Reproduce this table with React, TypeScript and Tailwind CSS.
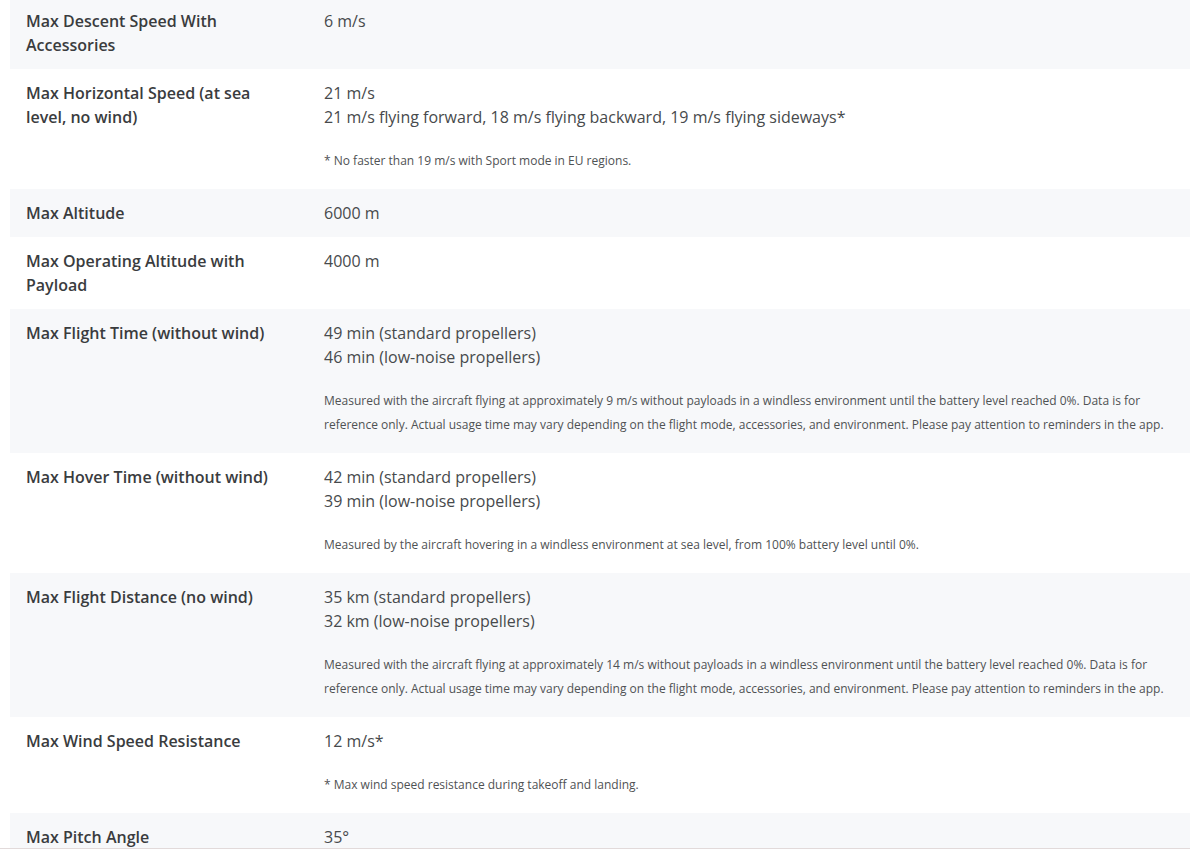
type Spec = {
  label: string;
  values: string[];
  notes?: string[];
};

const specs: Spec[] = [
  { label: "Max Descent Speed With Accessories", values: ["6 m/s"] },
  {
    label: "Max Horizontal Speed (at sea level, no wind)",
    values: ["21 m/s", "21 m/s flying forward, 18 m/s flying backward, 19 m/s flying sideways*"],
    notes: ["* No faster than 19 m/s with Sport mode in EU regions."],
  },
  { label: "Max Altitude", values: ["6000 m"] },
  { label: "Max Operating Altitude with Payload", values: ["4000 m"] },
  {
    label: "Max Flight Time (without wind)",
    values: ["49 min (standard propellers)", "46 min (low-noise propellers)"],
    notes: [
      "Measured with the aircraft flying at approximately 9 m/s without payloads in a windless environment until the battery level reached 0%. Data is for reference only. Actual usage time may vary depending on the flight mode, accessories, and environment. Please pay attention to reminders in the app.",
    ],
  },
  {
    label: "Max Hover Time (without wind)",
    values: ["42 min (standard propellers)", "39 min (low-noise propellers)"],
    notes: ["Measured by the aircraft hovering in a windless environment at sea level, from 100% battery level until 0%."],
  },
  {
    label: "Max Flight Distance (no wind)",
    values: ["35 km (standard propellers)", "32 km (low-noise propellers)"],
    notes: [
      "Measured with the aircraft flying at approximately 14 m/s without payloads in a windless environment until the battery level reached 0%. Data is for reference only. Actual usage time may vary depending on the flight mode, accessories, and environment. Please pay attention to reminders in the app.",
    ],
  },
  {
    label: "Max Wind Speed Resistance",
    values: ["12 m/s*"],
    notes: ["* Max wind speed resistance during takeoff and landing."],
  },
  { label: "Max Pitch Angle", values: ["35°"] },
];

const SpecRow = ({ spec, shaded }: { spec: Spec; shaded: boolean }) => (
  <div className={`flex pl-4 pr-4 pt-3 ${spec.notes ? "pb-4" : "pb-3"} ${shaded ? "bg-[#f7f8fa]" : "bg-white"}`}>
    <div className="w-[298px] shrink-0 pr-12 text-[16px] leading-6 font-semibold text-[#3a3c3e]">{spec.label}</div>
    <div className="flex-1 pr-[10px]">
      {spec.values.map((v) => (
        <div key={v} className="text-[16px] leading-6 text-[#474a4c]">{v}</div>
      ))}
      {spec.notes && (
        <div className="mt-5">
          {spec.notes.map((n) => (
            <p key={n} className="text-[12px] leading-6 text-[#4f5254]">{n}</p>
          ))}
        </div>
      )}
    </div>
  </div>
);

export default function App() {
  return (
    <div className="h-[849px] overflow-hidden bg-white border-b border-[#e2dada]" style={{ fontFamily: '"Open Sans", "Liberation Sans", sans-serif' }}>
      <div className="-mt-[3px] ml-[10px]">
        {specs.map((s, i) => (
          <SpecRow key={s.label} spec={s} shaded={i % 2 === 0} />
        ))}
      </div>
    </div>
  );
}
